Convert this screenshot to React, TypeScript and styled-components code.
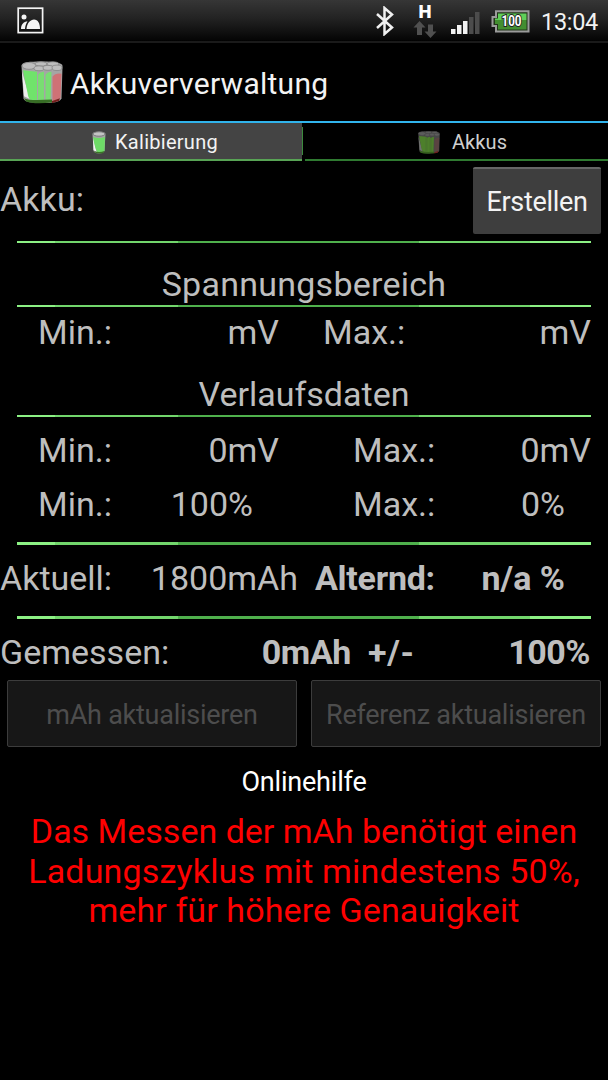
import React from "react";
import styled, { createGlobalStyle } from "styled-components";

const Global = createGlobalStyle`
  * { box-sizing: border-box; }
  body { margin: 0; background: #000; font-family: Roboto, "Liberation Sans", sans-serif; }
`;

const Screen = styled.div`
  width: 608px;
  height: 1080px;
  background: #000;
  color: #bebebe;
  display: flex;
  flex-direction: column;
  overflow: hidden;
`;

const StatusBar = styled.header`
  height: 43px;
  flex: none;
  display: flex;
  align-items: center;
  padding: 0 10px 0 17px;
  background: linear-gradient(#363636 0, #232323 18px, #050505 40px, #000 41px);
  border-bottom: 2px solid #1a1a1a;
`;

const StatusIcons = styled.div`
  margin-left: auto;
  display: flex;
  align-items: center;
`;

const Clock = styled.span`
  width: 57px;
  margin-left: 11px;
  color: #f2f2f2;
  font-size: 23.5px;
  line-height: 42px;
  padding-top: 2px;
  white-space: nowrap;
  letter-spacing: -0.3px;
`;

const TitleBar = styled.div`
  height: 80px;
  flex: none;
  display: flex;
  align-items: center;
  padding-left: 21px;
  border-bottom: 2px solid #31b4ec;
`;

const Title = styled.h1`
  margin: 3px 0 0 7px;
  font-size: 30px;
  line-height: 40px;
  font-weight: 400;
  letter-spacing: 0.27px;
  color: #f3f3f3;
  white-space: nowrap;
`;

const Tabs = styled.nav`
  height: 38px;
  flex: none;
  display: grid;
  grid-template-columns: 302px 3px 303px;
`;

const TabSeparator = styled.div`
  height: 28px;
  margin-top: 4px;
  background: linear-gradient(90deg, #3c8a3d 1px, #000 1px);
`;

const Tab = styled.div<{ $active?: boolean }>`
  display: flex;
  align-items: center;
  justify-content: center;
  gap: ${(p) => (p.$active ? 9 : 12)}px;
  padding: 2px 0 0 ${(p) => (p.$active ? 8 : 12)}px;
  background: ${(p) => (p.$active ? "#444" : "#000")};
  color: ${(p) => (p.$active ? "#f3f3f3" : "#cfcfcf")};
  border-bottom: 2px solid ${(p) => (p.$active ? "#58a455" : "#2f7a31")};
  font-size: 20px;
  line-height: 28px;
  letter-spacing: ${(p) => (p.$active ? 0.27 : 0.1)}px;
`;

const Divider = styled.div<{ $thick?: boolean }>`
  flex: none;
  height: ${(p) => (p.$thick ? 3 : 2)}px;
  margin: 0 17px;
  background: linear-gradient(
    90deg,
    #8cf184 0 38px,
    #72d66c 38px 161px,
    #4fb04c 161px 402px,
    #72d66c 402px 513px,
    #8cf184 513px
  );
`;

const Row = styled.div<{ $cols: string; $h: number; $top?: number }>`
  flex: none;
  display: grid;
  grid-template-columns: ${(p) => p.$cols};
  height: ${(p) => p.$h}px;
  padding-top: ${(p) => p.$top ?? 0}px;
  align-items: start;
  font-size: 34px;
  line-height: 50px;
  white-space: nowrap;
`;

const Cell = styled.span<{ $right?: boolean; $bold?: boolean; $track?: number }>`
  justify-self: ${(p) => (p.$right ? "end" : "start")};
  font-weight: ${(p) => (p.$bold ? 700 : 400)};
  letter-spacing: ${(p) => p.$track ?? 0}px;
`;

const BatteryLabel = styled(Cell)`
  margin-top: 13px;
  letter-spacing: 0.1px;
`;

const SectionTitle = styled.h2<{ $h: number; $top: number; $track?: number }>`
  flex: none;
  margin: 0;
  height: ${(p) => p.$h}px;
  padding-top: ${(p) => p.$top}px;
  text-align: center;
  font-size: 34px;
  line-height: 50px;
  font-weight: 400;
  letter-spacing: ${(p) => p.$track ?? 0}px;
`;

const CreateButton = styled.button`
  width: 128px;
  height: 67px;
  margin-top: 6px;
  padding: 1px 0 0;
  border: 0;
  border-top: 2px solid #666;
  border-radius: 2px;
  background: #3e3e3e;
  color: #f3f3f3;
  font: 400 27px Roboto, sans-serif;
  letter-spacing: -0.3px;
`;

const ButtonRow = styled.div`
  flex: none;
  display: flex;
  gap: 14px;
  padding: 0 7px;
`;

const DisabledButton = styled.button`
  flex: 1;
  height: 67px;
  padding: 3px 0 0;
  border: 1px solid #3c3c3c;
  border-radius: 2px;
  background: #171717;
  color: #4d4d4d;
  font: 400 27px Roboto, sans-serif;
  letter-spacing: -0.25px;
  white-space: nowrap;
`;

const HelpLink = styled.a`
  flex: none;
  margin-top: 15px;
  text-align: center;
  color: #fff;
  font-size: 27px;
  line-height: 40px;
  letter-spacing: -0.2px;
`;

const Warning = styled.p`
  flex: none;
  margin: 10px 0 0;
  text-align: center;
  color: #f00;
  font-size: 34px;
  line-height: 39.7px;
`;

const WarningLine = styled.span<{ $track?: number }>`
  display: block;
  letter-spacing: ${(p) => p.$track ?? 0}px;
`;

const PictureIcon = () => (
  <svg width="27" height="27" viewBox="0 0 27 27">
    <rect x="1.2" y="1.2" width="24.4" height="24.4" fill="none" stroke="#f4f4f4" strokeWidth="1.7" />
    <circle cx="7" cy="10" r="2.500" fill="#f4f4f4" />
    <path d="M4 22c0-5 3-7.500 6.500-7.500-1.300 1.800-2.300 4.500-2.500 7.500zM9.500 22c.5-6 4-9.500 7.500-9.500 4 0 6 4 6 9.500z" fill="#f4f4f4" />
  </svg>
);

const BluetoothIcon = () => (
  <svg width="18" height="30" viewBox="0 0 18 30">
    <path d="M1 8l15 13.500-7.500 6.500V2L16 8.500 1 22" fill="none" stroke="#f0f0f0" strokeWidth="2.500" />
  </svg>
);

const NetworkSymbol = styled.div`
  width: 24px;
  height: 36px;
  margin-left: 19px;
  display: flex;
  flex-direction: column;
  align-items: center;
  color: #fff;
  font-size: 18.5px;
  line-height: 18px;
  font-weight: 900;
`;

const NetworkIcon = () => (
  <NetworkSymbol>
    H
    <svg width="24" height="18" viewBox="0 0 24 18">
      <path d="M6.500 0L12.500 6.500H9V14H4V6.500H.5zM15 3.500H20V10.500H23.500L17.500 17 11.500 10.500H15z" fill="#505050" />
    </svg>
  </NetworkSymbol>
);

const SignalSvg = styled.svg`
  margin: 4px 0 0 14px;
`;

const SignalIcon = () => (
  <SignalSvg width="29" height="24" viewBox="0 0 29 24">
    <path d="M0 18h4.500v5H0zM6 14h4.500v9H6zM12 10h4.500v13H12z" fill="#f2f2f2" />
    <path d="M18 6h4.500v17H18zM24 1h4.500v22H24z" fill="#4c4c4c" />
  </SignalSvg>
);

const BatterySvg = styled.svg`
  margin: 2px 0 0 11px;
`;

const BatteryIcon = () => (
  <BatterySvg width="39" height="23" viewBox="0 0 39 23">
    <path d="M5 1.200H37.500V21.500H5V16H1.500V7H5z" fill="#23351a" stroke="#9b9b9b" strokeWidth="2" />
    <path d="M7 3.500H35.500V10H4V8.500H7z" fill="#5fce58" />
    <path d="M4 10H35.500V19.500H7V14H4z" fill="#438e30" />
    <text
      x="20.500"
      y="16.300"
      textAnchor="middle"
      textLength="20"
      lengthAdjust="spacingAndGlyphs"
      fontFamily="Roboto"
      fontWeight="700"
      fontSize="14"
      fill="#fff"
      stroke="#222"
      strokeWidth="2"
      paintOrder="stroke"
    >
      100
    </text>
  </BatterySvg>
);

const PackIcon = ({ width, height, dim }: { width: number; height: number; dim?: boolean }) => (
  <svg width={width} height={height} viewBox="0 0 42 44" preserveAspectRatio="none">
    <path d="M.5 5C.5 1 8 .5 21 .5S41.500 2 41.500 5L40.500 38c-1 4-9 5-19 5S3 42 2.500 38z" fill={dim ? "#484848" : "#a5a5a5"} />
    <path d="M1 11l2 25 6 3z" fill={dim ? "#707070" : "#eee"} />
    <path d="M2 9.500l14 1.500v30c-5 0-8-1-9-6z" fill={dim ? "#4d7f2b" : "#70e36b"} />
    <path d="M17 14q2-3 6-3v30h-6zM24.500 14q2-3 6-3l-1 29.500h-5z" fill={dim ? "#4d7f2b" : "#79dd72"} />
    {dim && <path d="M14 12h4v28h-4zM22 13h4v27h-4z" fill="#4a762d" />}
    <path d="M31.500 16q3-4 9-3l-1 25-8 3z" fill={dim ? "#5a4341" : "#cf7276"} />
    <path d="M3 38q4 2 13 2l15-.5v3q-18 2-26-1z" fill={dim ? "#36601d" : "#376d25"} />
    <path d="M31 41l8-3-1 3-7 2z" fill="#761d1c" />
    <g fill={dim ? "#5c5c5c" : "#bdbdbd"} stroke={dim ? "#444" : "#858585"} strokeWidth=".8">
      <ellipse cx="8" cy="5" rx="7" ry="3.500" />
      <ellipse cx="20" cy="3" rx="6" ry="2.200" />
      <ellipse cx="32" cy="3" rx="6" ry="2.200" />
      <ellipse cx="18" cy="7.500" rx="5" ry="2.500" />
      <ellipse cx="27" cy="7" rx="5" ry="2.500" />
      <ellipse cx="36" cy="7" rx="5" ry="2.800" />
    </g>
  </svg>
);

const CellIcon = () => (
  <svg width="14" height="23" viewBox="0 0 14 23">
    <path d="M.5 3Q.5.5 7 .5T13.500 3L12.500 20Q11 22.500 7 22.500T1.500 20z" fill="#a5a5a5" />
    <path d="M1 6l.5 13 3 2z" fill="#f2f2f2" />
    <path d="M1 6q6 2 12 0l-.5 14q-2 2-7 1.500Q3 18 1 6z" fill="#6edb67" />
    <path d="M2 20q5 2 10.500 0-1 3-5.500 2.500-4 0-5-2.500z" fill="#3b7428" />
    <ellipse cx="7" cy="3" rx="6" ry="2.200" fill="#c4c4c4" stroke="#6d6d6d" strokeWidth=".8" />
  </svg>
);

export default function App() {
  return (
    <Screen>
      <Global />
      <StatusBar>
        <PictureIcon />
        <StatusIcons>
          <BluetoothIcon />
          <NetworkIcon />
          <SignalIcon />
          <BatteryIcon />
          <Clock>13:04</Clock>
        </StatusIcons>
      </StatusBar>
      <TitleBar>
        <PackIcon width={42} height={43} />
        <Title>Akkuververwaltung</Title>
      </TitleBar>
      <Tabs>
        <Tab $active>
          <CellIcon />
          Kalibierung
        </Tab>
        <TabSeparator />
        <Tab>
          <PackIcon width={22} height={23} dim />
          Akkus
        </Tab>
      </Tabs>
      <Row $cols="473px 128px" $h={80}>
        <BatteryLabel>Akku:</BatteryLabel>
        <CreateButton>Erstellen</CreateButton>
      </Row>
      <Divider />
      <SectionTitle $h={62} $top={16} $track={0.25}>Spannungsbereich</SectionTitle>
      <Divider />
      <Row $cols="38px 80px 161px 44px 100px 168px" $h={50}>
        <span />
        <Cell>Min.:</Cell>
        <Cell $right>mV</Cell>
        <span />
        <Cell>Max.:</Cell>
        <Cell $right>mV</Cell>
      </Row>
      <SectionTitle $h={58} $top={12}>Verlaufsdaten</SectionTitle>
      <Divider />
      <Row $cols="38px 80px 161px 74px 100px 138px" $h={60} $top={8}>
        <span />
        <Cell>Min.:</Cell>
        <Cell $right>0mV</Cell>
        <span />
        <Cell>Max.:</Cell>
        <Cell $right>0mV</Cell>
      </Row>
      <Row $cols="38px 80px 135px 100px 100px 112px" $h={65} $top={2}>
        <span />
        <Cell>Min.:</Cell>
        <Cell $right>100%</Cell>
        <span />
        <Cell>Max.:</Cell>
        <Cell $right>0%</Cell>
      </Row>
      <Divider $thick />
      <Row $cols="130px 168px 17px 120px 130px" $h={71} $top={8}>
        <Cell>Aktuell:</Cell>
        <Cell $right>1800mAh</Cell>
        <span />
        <Cell $bold $track={-0.25}>Alternd:</Cell>
        <Cell $right $bold>n/a %</Cell>
      </Row>
      <Divider $thick />
      <Row $cols="200px 151px 17px 80px 142px" $h={61} $top={8}>
        <Cell>Gemessen:</Cell>
        <Cell $right $bold $track={-0.4}>0mAh</Cell>
        <span />
        <Cell $bold $track={0.7}>+/-</Cell>
        <Cell $right $bold $track={-0.5}>100%</Cell>
      </Row>
      <ButtonRow>
        <DisabledButton disabled>mAh aktualisieren</DisabledButton>
        <DisabledButton disabled>Referenz aktualisieren</DisabledButton>
      </ButtonRow>
      <HelpLink>Onlinehilfe</HelpLink>
      <Warning>
        <WarningLine>Das Messen der mAh benötigt einen</WarningLine>
        <WarningLine $track={0.16}>Ladungszyklus mit mindestens 50%,</WarningLine>
        <WarningLine $track={0.1}>mehr für höhere Genauigkeit</WarningLine>
      </Warning>
    </Screen>
  );
}
